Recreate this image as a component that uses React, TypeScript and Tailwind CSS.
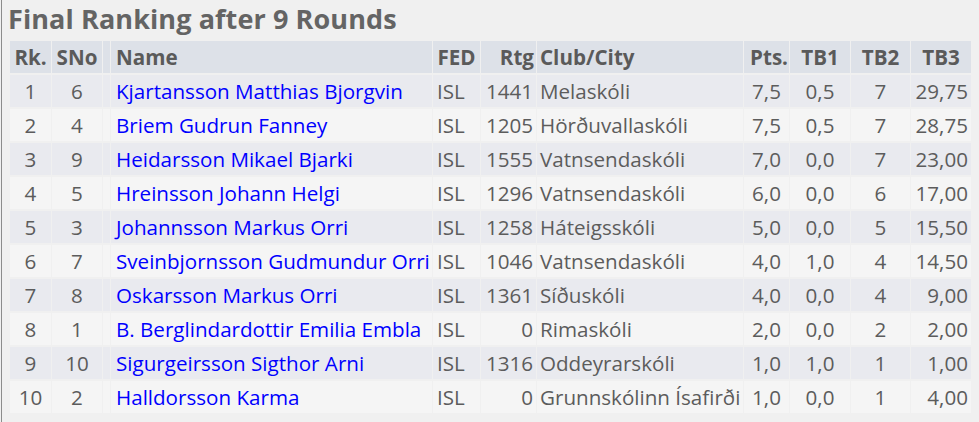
import React from "react";

type Row = [string, string, string, string, string, string, string, string, string, string];

const rows: Row[] = [
  ["1", "6", "Kjartansson Matthias Bjorgvin", "ISL", "1441", "Melaskóli", "7,5", "0,5", "7", "29,75"],
  ["2", "4", "Briem Gudrun Fanney", "ISL", "1205", "Hörðuvallaskóli", "7,5", "0,5", "7", "28,75"],
  ["3", "9", "Heidarsson Mikael Bjarki", "ISL", "1555", "Vatnsendaskóli", "7,0", "0,0", "7", "23,00"],
  ["4", "5", "Hreinsson Johann Helgi", "ISL", "1296", "Vatnsendaskóli", "6,0", "0,0", "6", "17,00"],
  ["5", "3", "Johannsson Markus Orri", "ISL", "1258", "Háteigsskóli", "5,0", "0,0", "5", "15,50"],
  ["6", "7", "Sveinbjornsson Gudmundur Orri", "ISL", "1046", "Vatnsendaskóli", "4,0", "1,0", "4", "14,50"],
  ["7", "8", "Oskarsson Markus Orri", "ISL", "1361", "Síðuskóli", "4,0", "0,0", "4", "9,00"],
  ["8", "1", "B. Berglindardottir Emilia Embla", "ISL", "0", "Rimaskóli", "2,0", "0,0", "2", "2,00"],
  ["9", "10", "Sigurgeirsson Sigthor Arni", "ISL", "1316", "Oddeyrarskóli", "1,0", "1,0", "1", "1,00"],
  ["10", "2", "Halldorsson Karma", "ISL", "0", "Grunnskólinn Ísafirði", "1,0", "0,0", "1", "4,00"],
];

export default function App() {
  return (
    <div
      className="w-[979px] h-[422px] bg-[#f0f0f0] pl-[1px] overflow-hidden"
      style={{ fontFamily: '"Open Sans", "Noto Sans", sans-serif' }}
    >
      <div className="border-l border-[#8c8c8c] h-full pl-[6px]">
        <h1 className="text-[27px] leading-[37px] h-[39px] font-bold text-[#646464] tracking-[0.1px] whitespace-nowrap">
          Final Ranking after 9 Rounds
        </h1>
        <table className="ml-[1px] w-[963px] border-separate border-spacing-x-[1px] border-spacing-y-[2px] table-fixed text-[20.6px] leading-[26px] text-[#5c5c5c]">
          <colgroup>
            <col className="w-[41px]" />
            <col className="w-[50px]" />
            <col className="w-[7px]" />
            <col className="w-[321px]" />
            <col className="w-[47px]" />
            <col className="w-[55px]" />
            <col className="w-[206px]" />
            <col className="w-[45px]" />
            <col className="w-[60px]" />
            <col className="w-[59px]" />
            <col className="w-[60px]" />
          </colgroup>
          <thead>
            <tr className="bg-[#dde1e8] h-[32px] text-[#5a5a5a]">
              <th className="text-center font-bold whitespace-nowrap">Rk.</th>
              <th className="text-center font-bold whitespace-nowrap">SNo</th>
              <th></th>
              <th className="text-left pl-[5px] font-bold">Name</th>
              <th className="text-center font-bold">FED</th>
              <th className="text-right pr-[2px] font-bold">Rtg</th>
              <th className="text-left pl-[3px] font-bold whitespace-nowrap">Club/City</th>
              <th className="text-right pr-[1px] font-bold whitespace-nowrap">Pts.</th>
              <th className="text-center font-bold">TB1</th>
              <th className="text-center font-bold">TB2</th>
              <th className="text-center font-bold">TB3</th>
            </tr>
          </thead>
          <tbody>
            {rows.map((r, i) => (
              <tr key={i} className={`h-[32px] ${i % 2 === 0 ? "bg-[#e9eaef]" : "bg-[#f5f5f5]"}`}>
                <td className="text-center">{r[0]}</td>
                <td className="text-center">{r[1]}</td>
                <td></td>
                <td className="text-left pl-[5px] whitespace-nowrap text-[#0000ff]">{r[2]}</td>
                <td className="text-left pl-[4px]">{r[3]}</td>
                <td className="text-right pr-[3px]">{r[4]}</td>
                <td className="text-left pl-[3px] whitespace-nowrap">{r[5]}</td>
                <td className="text-center">{r[6]}</td>
                <td className="text-center">{r[7]}</td>
                <td className="text-center">{r[8]}</td>
                <td className="text-right pr-[3px]">{r[9]}</td>
              </tr>
            ))}
          </tbody>
        </table>
      </div>
    </div>
  );
}
